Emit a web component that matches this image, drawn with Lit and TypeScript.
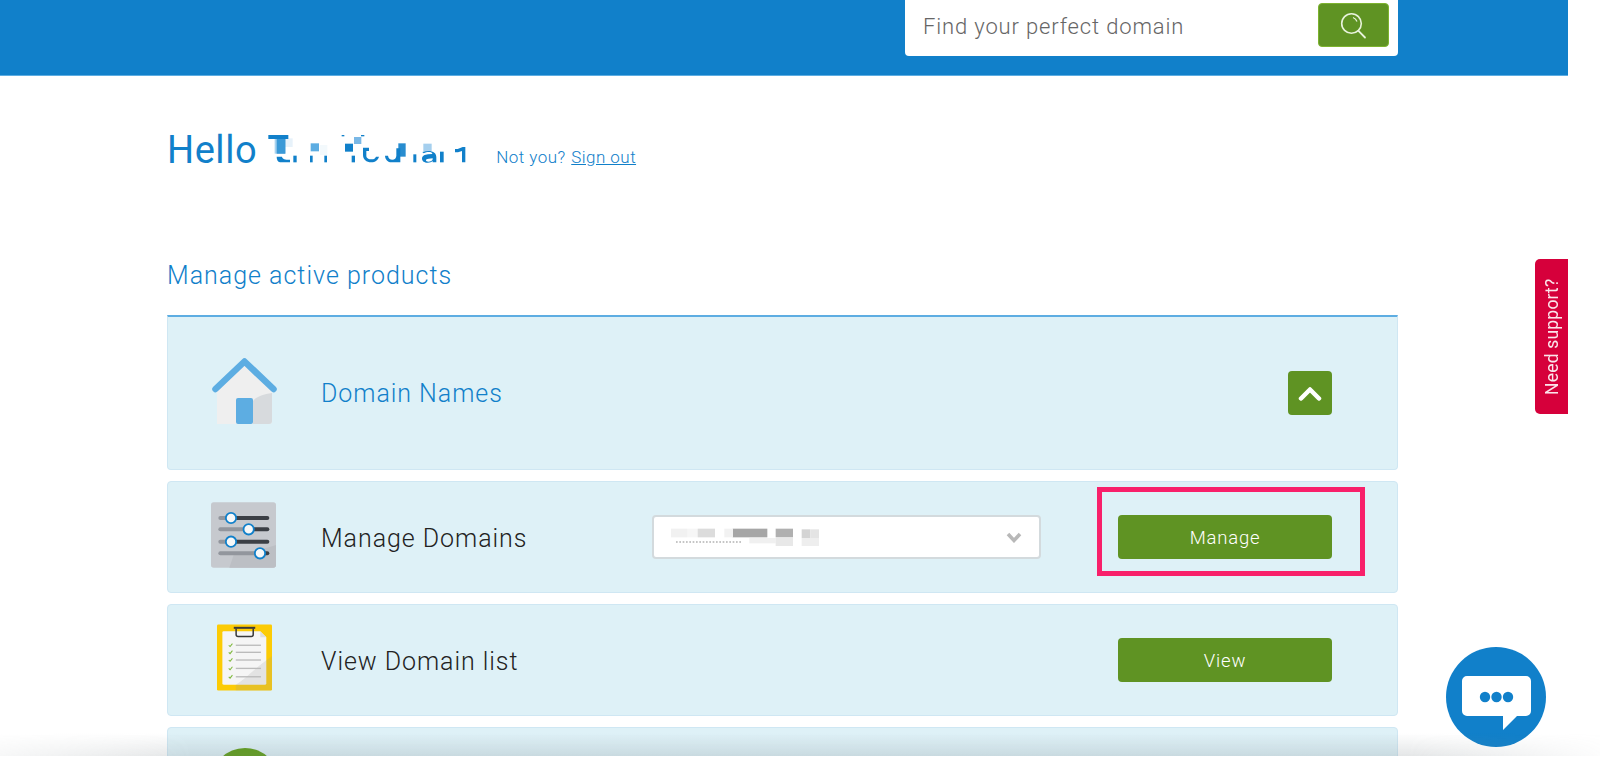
import { LitElement, html, css, svg } from "lit";
import { customElement } from "lit/decorators.js";

const searchIcon = svg`<circle cx="11.5" cy="11.5" r="9.8" fill="none" stroke="#e8f3dc" stroke-width="1.6"/><path d="M18.5 18.8L25 25.5" stroke="#e8f3dc" stroke-width="1.8" stroke-linecap="round"/><path d="M13 5.5a6.5 6.5 0 0 1 4 4" fill="none" stroke="#e8f3dc" stroke-width="1.2"/>`;

const house = svg`
<path d="M5 31L32.500 5L60 31V63a3 3 0 0 1-3 3H5z" fill="#efefef"/>
<path d="M41 43C44 39 51 36 60 35V63a3 3 0 0 1-3 3H41z" fill="#d7dadd"/>
<rect x="24" y="40" width="17" height="26" rx="2" fill="#5dade2"/>
<path d="M3.500 31L32.500 3.500L61.500 31" fill="none" stroke="#5dade2" stroke-width="6.500" stroke-linecap="round" stroke-linejoin="round"/>`;

const sliders = svg`
<rect x="50" y="37" width="195" height="196" rx="8" fill="#c6c9ce"/>
<path d="M105 233L118 195C150 190 200 180 245 165V225a8 8 0 0 1-8 8z" fill="#bcbfc4"/>
${[[84, 110], [118, 163], [155, 110], [190, 197]].map(([y, x]) => svg`
<line x1="78" x2="${x}" y1="${y}" y2="${y}" stroke="#92969d" stroke-width="12" stroke-linecap="round"/>
<line x1="${x}" x2="219" y1="${y}" y2="${y}" stroke="#3b3f45" stroke-width="12" stroke-linecap="round"/>
<circle cx="${x}" cy="${y}" r="15.500" fill="#f7f8f8" stroke="#1180ca" stroke-width="5.500"/>`)}`;

const clipboard = svg`
<rect x="66" y="30" width="164" height="197" rx="4" fill="#fccb05"/>
<path d="M86 50H195L213 68V205a5 5 0 0 1-5 5H87a5 5 0 0 1-5-5V54a4 4 0 0 1 4-4z" fill="#f5f5f5"/>
<path d="M195 50V68H213z" fill="#dedede"/>
<path d="M122 227V210C155 190 190 150 230 125V223a4 4 0 0 1-4 4z" fill="#9a9a9a" fill-opacity=".2"/>
<path d="M116 40H180" stroke="#3a3a3a" stroke-width="6"/>
<path d="M123 42V60a6 6 0 0 0 6 6H168a6 6 0 0 0 6-6V42" fill="none" stroke="#3a3a3a" stroke-width="4.500"/>
${[92, 113, 136, 161, 186].map((y) => svg`
<path d="M101 ${y}l4 4l7-9" fill="none" stroke="#7db83a" stroke-width="3"/>
<line x1="122" x2="197" y1="${y}" y2="${y}" stroke="#bbbbbb" stroke-width="4"/>`)}`;

const nameBlur = svg`
<g fill="#1180ca">
<rect x="25" y="30" width="60" height="12"/>
<rect x="50" y="42" width="26" height="44"/>
<path d="M50 95h16c2 8 8 9 24 9v8H60c-7-2-10-8-10-17z"/>
<rect x="100" y="92" width="10" height="20"/>
<rect x="150" y="92" width="8" height="20"/>
<rect x="193" y="92" width="8" height="20"/>
<rect x="255" y="56" width="24" height="24"/>
<rect x="275" y="92" width="10" height="20"/>
<rect x="245" y="30" width="8" height="4"/>
<rect x="303" y="30" width="10" height="4"/>
<path d="M309 68h18v10h-8v14c0 8 8 11 16 11 7 0 11-3 13-8h9c-3 10-11 17-23 17-15 0-25-9-25-22z"/>
<path d="M375 92h9c1 8 6 12 13 12s12-5 12-12V70h12v42h-26c-12 0-19-8-20-20z" />
<rect x="460" y="88" width="9" height="24"/>
<path d="M505 78c16 0 24 7 24 19v15h-11v-4c-4 3-8 5-15 5-10 0-17-5-17-12 0-8 8-12 18-13l13-1c0-4-4-6-11-6-5 0-10 1-15 4l-4-4c5-2 11-3 18-3zm13 22l-12 1c-6 1-8 2-8 5s3 4 7 4c6 0 13-3 13-7z"/>
<rect x="540" y="80" width="11" height="32"/>
<path d="M585 72h8l15-6h8v46h-10V78l-12 4h-9z"/>
</g>
<rect x="72" y="40" width="26" height="26" fill="#1180ca" fill-opacity=".1"/>
<rect x="44" y="42" width="32" height="44" fill="#5dade2" fill-opacity=".55"/>
<rect x="152" y="55" width="25" height="24" fill="#5dade2"/>
<rect x="180" y="60" width="22" height="30" fill="#1180ca" fill-opacity=".05"/>
<rect x="282" y="36" width="22" height="21" fill="#7ab8e6"/>
<rect x="415" y="55" width="22" height="40" fill="#1180ca" fill-opacity=".9"/>
<rect x="490" y="56" width="25" height="22" fill="#a5cfee"/>`;

const selectBlur = svg`
<g>
<rect x="60" y="56" width="50" height="26" fill="#f1f1f1"/>
<rect x="110" y="56" width="30" height="26" fill="#f6f6f6"/>
<rect x="140" y="56" width="52" height="26" fill="#dcdcdc"/>
<rect x="245" y="56" width="104" height="26" fill="#a6a6a6"/>
<rect x="374" y="56" width="52" height="26" fill="#b0b0b0"/>
<rect x="452" y="58" width="26" height="26" fill="#d4d4d4"/>
<rect x="478" y="58" width="26" height="26" fill="#e4e4e4"/>
<rect x="374" y="84" width="52" height="24" fill="#e8e8e8"/>
<rect x="452" y="84" width="52" height="24" fill="#eeeeee"/>
<rect x="295" y="84" width="80" height="16" fill="#f0f0f0"/>
<path d="M75 96H275" stroke="#8b8b8b" stroke-width="3" stroke-dasharray="5 5"/>
<rect x="220" y="56" width="26" height="26" fill="#f2f2f2"/>
</g>`;

@customElement("app-root")
export class AppRoot extends LitElement {
  static styles = css`
    :host { display: block; font-family: Roboto, "Liberation Sans", sans-serif; }
    .page { position: relative; width: 1600px; height: 764px; overflow: hidden; background: #fff; }
    .top { width: 1568px; height: 76px; background: #1180ca; display: flex; justify-content: flex-end; padding-right: 170px; box-sizing: border-box; border-bottom: 1px solid #5dade2; }
    .search { width: 493px; height: 56px; box-sizing: border-box; background: #fff; border-radius: 0 0 4px 4px; display: flex; align-items: center; justify-content: space-between; padding: 0 9px 0 18px; }
    .search span { font-size: 22px; font-weight: 300; letter-spacing: .85px; color: #666; margin-top: -4px; }
    .sbtn { width: 71px; height: 44px; margin-top: -6px; background: #5f9323; border: 1px solid #7db32f; box-sizing: border-box; border-radius: 4px; display: flex; align-items: center; justify-content: center; }
    .sbtn svg { width: 27px; height: 27px; }
    main { width: 1568px; box-sizing: border-box; padding: 0 170px 0 167px; }
    .hello { display: flex; align-items: baseline; height: 137px; padding-top: 49px; box-sizing: content-box; color: #1180ca; }
    .hello h1 { margin: 0; font-size: 38px; font-weight: 400; line-height: 44px; letter-spacing: .55px; }
    .hello svg { width: 215px; height: 38px; margin: 0 21px 0 3px; }
    .hello p { margin: 0; font-size: 17px; font-weight: 300; color: #1180ca; letter-spacing: .46px; }
    .hello a { color: #1180ca; text-decoration: underline; margin-left: 1px; }
    h2 { margin: 0; height: 53px; box-sizing: border-box; font-size: 25px; line-height: 28px; font-weight: 300; letter-spacing: 1px; color: #1180ca; }
    .list { display: flex; flex-direction: column; gap: 11px; }
    .row { display: grid; grid-template-columns: 110px 331px 389px 1fr 214px; align-items: center; box-sizing: border-box; height: 112px; padding: 0 65px 0 43px; background: #def1f7; border: 1px solid #cfe7f3; border-radius: 4px; color: #222; font-size: 25px; font-weight: 300; letter-spacing: .95px; }
    .row.head { height: 155px; border-top: 2px solid #5dade2; border-radius: 0 0 4px 4px; color: #1180ca; }
    .row.head .ic { margin-left: 1px; }
    .row.head .name { margin-top: 0; }
    .row.last { height: 112px; align-items: start; padding-top: 20px; }
    .ic { display: flex; justify-content: flex-start; margin-bottom: 5px; }
    .ic svg { display: block; }
    .clip { margin-left: 6px; margin-bottom: 5px; }
    .name { grid-column: 2; margin-top: 2px; }
    .sel { grid-column: 3; height: 44px; box-sizing: border-box; background: #fff; border: 2px solid #d3dadd; border-radius: 4px; display: flex; align-items: center; justify-content: space-between; overflow: hidden; }
    .sel svg.b { width: 200px; height: 50px; flex: none; margin: -4px 0 0 -3px; filter: blur(.7px); }
    .sel svg.c { width: 16px; height: 11px; margin-right: 17px; }
    .act { grid-column: 5; height: 44px; box-sizing: border-box; padding-top: 1px; background: #5f9323; border: 0; border-radius: 4px; color: #fff; display: flex; align-items: center; justify-content: center; font-size: 18.5px; font-weight: 300; letter-spacing: .8px; }
    .up { grid-column: 5; justify-self: end; width: 44px; height: 44px; background: #5f9323; border-radius: 4px; display: flex; align-items: center; justify-content: center; }
    .up svg { width: 24px; height: 15px; }
    .dot { width: 68px; height: 68px; border-radius: 50%; background: #5f9e18; }
    .mark { position: absolute; left: 1097px; top: 487px; width: 268px; height: 89px; box-sizing: border-box; border: 5px solid #f8206a; }
    .support { position: absolute; left: 1535px; top: 259px; width: 33px; height: 155px; box-sizing: border-box; background: #d6003b; color: #fbe5eb; writing-mode: vertical-rl; transform: rotate(180deg); border-radius: 0 5px 5px 0; display: flex; align-items: center; justify-content: center; font-size: 17.5px; letter-spacing: .2px; font-weight: 400; }
    .chat { position: absolute; left: 1446px; top: 647px; width: 100px; height: 100px; }
    .fade { position: absolute; left: 0; top: 733px; width: 1600px; height: 23px; background: linear-gradient(to bottom, rgba(120,130,135,0), rgba(120,130,135,.2)); -webkit-mask-image: linear-gradient(to right, rgba(0,0,0,.3), #000 12%, #000 88%, rgba(0,0,0,.1)); mask-image: linear-gradient(to right, rgba(0,0,0,.3), #000 12%, #000 88%, rgba(0,0,0,.1)); }
    .strip { position: absolute; left: 0; top: 756px; width: 1600px; height: 8px; background: #fff; }
  `;

  render() {
    return html`<div class="page">
      <header class="top">
        <div class="search">
          <span>Find your perfect domain</span>
          <div class="sbtn"><svg viewBox="0 0 27 27">${searchIcon}</svg></div>
        </div>
      </header>
      <main>
        <div class="hello">
          <h1>Hello</h1>
          <svg viewBox="0 0 645 114">${nameBlur}</svg>
          <p>Not you? <a href="#">Sign out</a></p>
        </div>
        <h2>Manage active products</h2>
        <div class="list">
          <div class="row head">
            <div class="ic"><svg width="65" height="66" viewBox="0 0 65 66">${house}</svg></div>
            <div class="name">Domain Names</div>
            <div class="up"><svg viewBox="0 0 24 15"><path d="M3 12.500L12 3.500L21 12.500" fill="none" stroke="#fff" stroke-width="4.500" stroke-linecap="round" stroke-linejoin="round"/></svg></div>
          </div>
          <div class="row">
            <div class="ic"><svg width="65" height="66" viewBox="50 37 195 196">${sliders}</svg></div>
            <div class="name">Manage Domains</div>
            <div class="sel">
              <svg class="b" viewBox="0 0 600 150">${selectBlur}</svg>
              <svg class="c" viewBox="0 0 16 11"><path d="M2 2l6 6.500L14 2" fill="none" stroke="#b8b8b8" stroke-width="3.500"/></svg>
            </div>
            <div class="act">Manage</div>
          </div>
          <div class="row">
            <div class="ic clip"><svg width="55" height="67" viewBox="66 30 164 197">${clipboard}</svg></div>
            <div class="name">View Domain list</div>
            <div class="act">View</div>
          </div>
          <div class="row last">
            <div class="ic"><div class="dot"></div></div>
          </div>
        </div>
      </main>
      <div class="mark"></div>
      <div class="support">Need support?</div>
      <svg class="chat" viewBox="0 0 100 100">
        <circle cx="50" cy="50" r="50" fill="#1180ca"/>
        <path d="M21 29H80a5 5 0 0 1 5 5V64a5 5 0 0 1-5 5H71L57 83V69H21a5 5 0 0 1-5-5V34a5 5 0 0 1 5-5z" fill="#fff"/>
        <circle cx="39" cy="50" r="5.200" fill="#1180ca"/><circle cx="50.500" cy="50" r="5.200" fill="#1180ca"/><circle cx="62" cy="50" r="5.200" fill="#1180ca"/>
      </svg>
      <div class="fade"></div>
      <div class="strip"></div>
    </div>`;
  }
}
